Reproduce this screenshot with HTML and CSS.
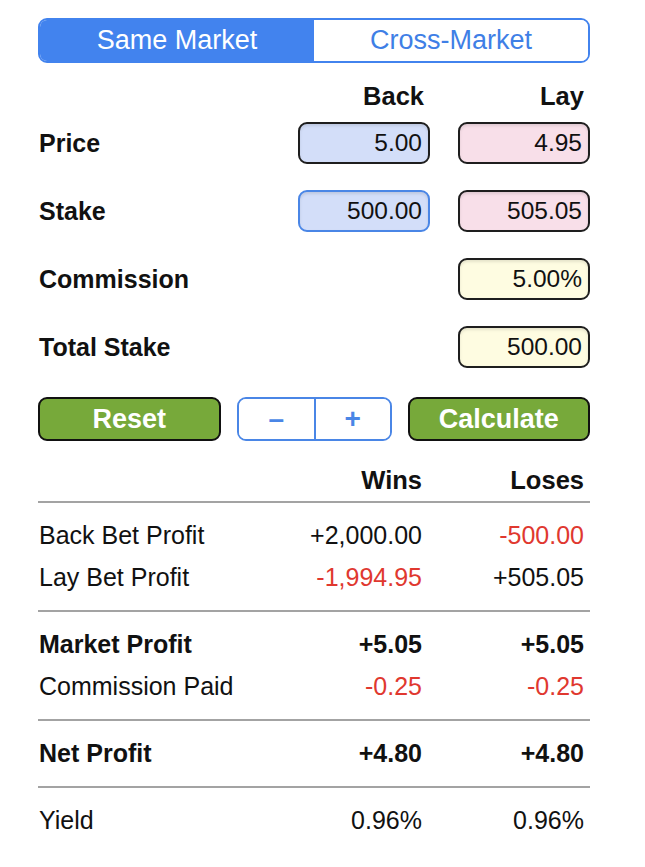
FILE: index.html
```html
<!DOCTYPE html>
<html lang="en">
<head>
  <meta charset="UTF-8" />
  <title>Matched Betting Calculator</title>
  <meta name="viewport" content="width=device-width, initial-scale=1.0" />
  <link rel="stylesheet" href="styles.css">
</head>
<body>
  <div class="calc">
    <div class="segmented">
      <button class="seg active">Same Market</button>
      <button class="seg">Cross-Market</button>
    </div>

    <div class="inputs">
      <div></div>
      <div class="col-head">Back</div>
      <div class="col-head">Lay</div>

      <label>Price</label>
      <input class="field back" value="5.00">
      <input class="field lay" value="4.95">

      <label>Stake</label>
      <input class="field back focused" value="500.00">
      <input class="field lay" value="505.05">

      <label>Commission</label>
      <div></div>
      <input class="field extra" value="5.00%">

      <label>Total Stake</label>
      <div></div>
      <input class="field extra" value="500.00">
    </div>

    <div class="actions">
      <button class="btn green">Reset</button>
      <div class="stepper">
        <button class="step">&ndash;</button>
        <button class="step">+</button>
      </div>
      <button class="btn green">Calculate</button>
    </div>

    <div class="results">
      <div class="group head">
        <div class="row bold">
          <span></span><span>Wins</span><span>Loses</span>
        </div>
      </div>
      <div class="group">
        <div class="row">
          <span>Back Bet Profit</span><span>+2,000.00</span><span class="neg">-500.00</span>
        </div>
        <div class="row">
          <span>Lay Bet Profit</span><span class="neg">-1,994.95</span><span>+505.05</span>
        </div>
      </div>
      <div class="group">
        <div class="row bold">
          <span>Market Profit</span><span>+5.05</span><span>+5.05</span>
        </div>
        <div class="row">
          <span>Commission Paid</span><span class="neg">-0.25</span><span class="neg">-0.25</span>
        </div>
      </div>
      <div class="group">
        <div class="row bold">
          <span>Net Profit</span><span>+4.80</span><span>+4.80</span>
        </div>
      </div>
      <div class="group last">
        <div class="row">
          <span>Yield</span><span>0.96%</span><span>0.96%</span>
        </div>
      </div>
    </div>
  </div>
</body>
</html>
```

FILE: styles.css
```css
body {
  margin: 0;
  background: #fff;
  color: #111;
  font-family: "Liberation Sans", Arial, sans-serif;
}

.calc {
  width: 552px;
  margin-left: 38px;
  padding-top: 18px;
}

button,
input {
  font-family: inherit;
}

/* segmented control */
.segmented {
  display: grid;
  grid-template-columns: 1fr 1fr;
  height: 45px;
  border: 2px solid #4283ee;
  border-radius: 9px;
  overflow: hidden;
  box-sizing: border-box;
}

.seg {
  border: none;
  background: #fff;
  color: #3f7fe6;
  font-size: 27px;
  padding: 0;
}

.seg.active {
  background: #4283ee;
  color: #fff;
}

/* price / stake inputs */
.inputs {
  display: grid;
  grid-template-columns: 1fr 132px 132px;
  grid-template-rows: 33px;
  grid-auto-rows: 42px;
  column-gap: 28px;
  row-gap: 26px;
  align-items: center;
}

.col-head {
  align-self: end;
  text-align: right;
  font-weight: bold;
  font-size: 25.5px;
  line-height: 28px;
  padding-right: 6px;
  margin-bottom: -14px;
}

.inputs label {
  font-weight: bold;
  font-size: 25px;
  padding-left: 1px;
}

.field {
  height: 42px;
  width: 100%;
  box-sizing: border-box;
  border: 2px solid #1e1e1e;
  border-radius: 9px;
  padding: 0 6px 0 4px;
  text-align: right;
  font-size: 24.5px;
  color: #111;
  box-shadow: inset 0 2px 3px rgba(0,0,0,0.1);
}

.field.back {
  background: #d3def9;
}

.field.back.focused {
  border-color: #4a86e6;
}

.field.lay {
  background: #f8dfe9;
}

.field.extra {
  background: #fefce1;
}

/* buttons */
.actions {
  display: grid;
  grid-template-columns: 1fr 155px 1fr;
  column-gap: 16px;
  height: 44px;
  margin-top: 29px;
}

.btn {
  border: 2px solid #111;
  border-radius: 9px;
  font-size: 27px;
  font-weight: bold;
  color: #fff;
  padding: 0;
}

.btn.green {
  background: #77a93a;
}

.stepper {
  display: grid;
  grid-template-columns: 1fr 1fr;
  border: 2px solid #4a86e6;
  border-radius: 9px;
  overflow: hidden;
}

.step {
  border: none;
  background: #fff;
  color: #4a86e6;
  font-size: 28px;
  font-weight: bold;
  padding: 0;
}

.step + .step {
  border-left: 2px solid #4a86e6;
}

/* results table */
.results {
  margin-top: 18px;
}

.group {
  padding: 11px 0 12px;
  border-bottom: 2px solid #a3a3a3;
}

.group.head {
  padding: 0;
}

.group.last {
  border-bottom: none;
}

.row {
  display: grid;
  grid-template-columns: 1fr 140px 162px;
  padding-right: 6px;
  line-height: 42px;
  font-size: 25px;
}

.row span:nth-child(n+2) {
  text-align: right;
}

.row span:first-child {
  padding-left: 1px;
}

.row.bold {
  font-weight: bold;
}

.head .row {
  font-size: 25.5px;
}

.neg {
  color: #e0382f;
}
```
